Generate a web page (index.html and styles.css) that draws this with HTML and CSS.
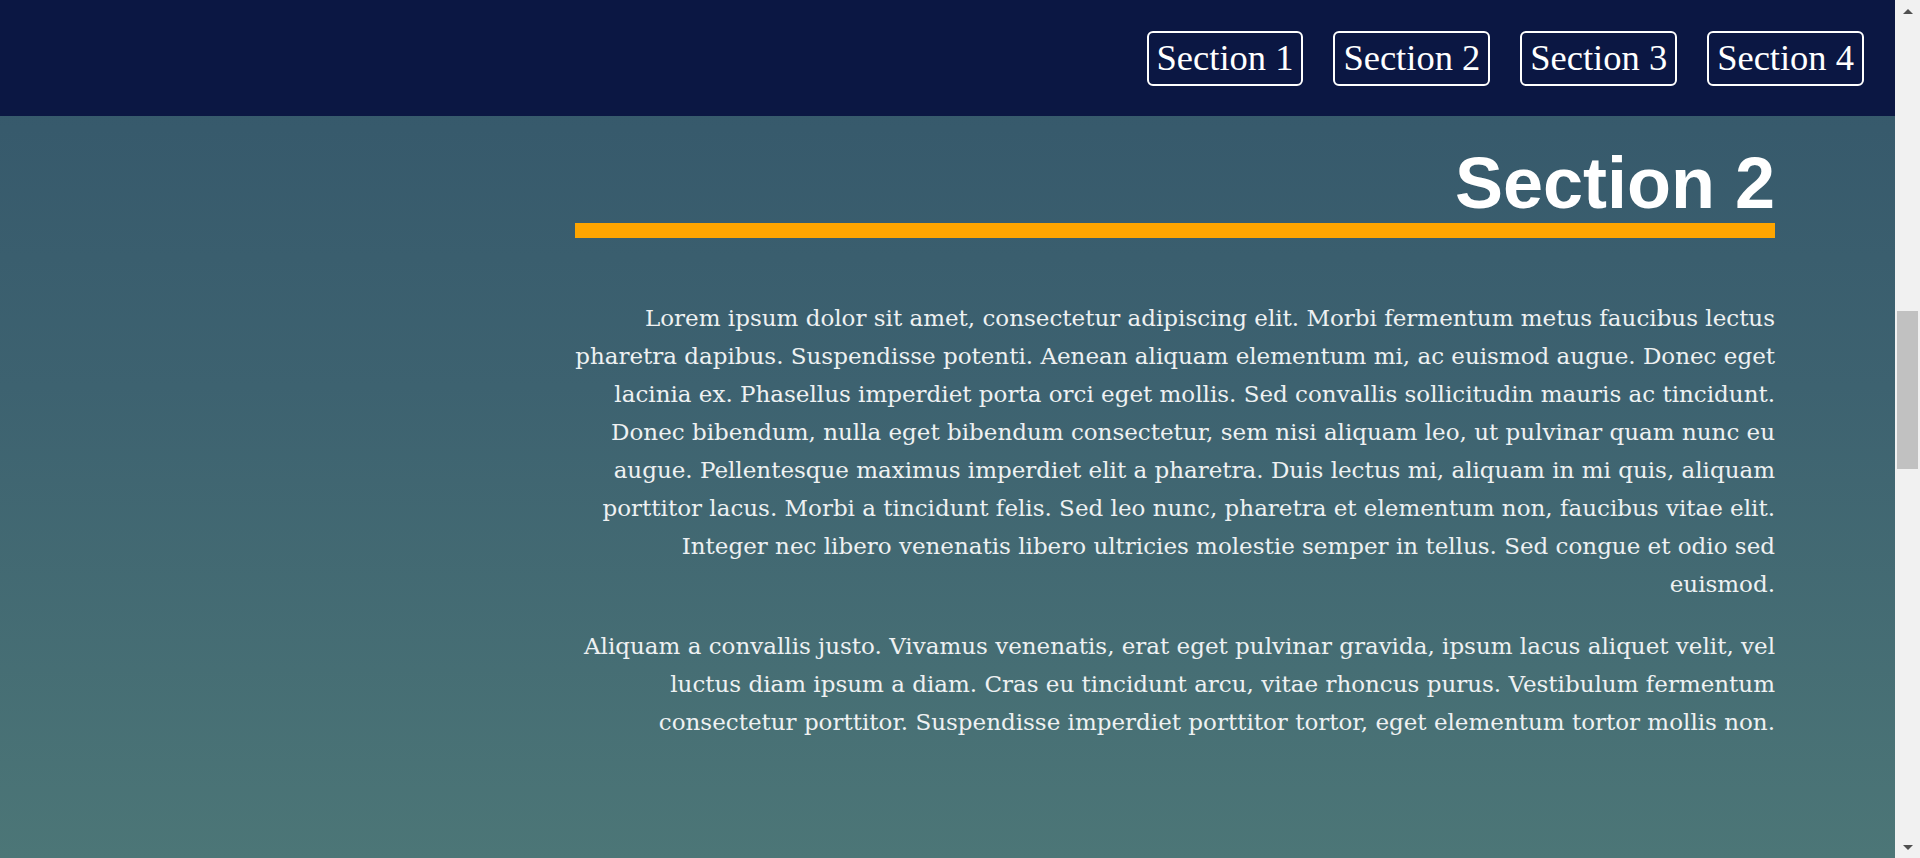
FILE: index.html
```html
<!DOCTYPE html>
<html lang="en">
<head>
<meta charset="utf-8">
<title>Section 2</title>
<link rel="stylesheet" href="styles.css">
</head>
<body>
<div class="viewport">
  <div class="page">
    <header class="topbar">
      <nav class="nav">
        <a class="nav-btn" href="#s1">Section 1</a>
        <a class="nav-btn" href="#s2">Section 2</a>
        <a class="nav-btn" href="#s3">Section 3</a>
        <a class="nav-btn" href="#s4">Section 4</a>
      </nav>
    </header>
    <main class="content">
      <section class="section" id="s2">
        <h1 class="section-title">Section 2</h1>
        <div class="title-bar"></div>
        <p class="text">Lorem ipsum dolor sit amet, consectetur adipiscing elit. Morbi fermentum metus faucibus lectus pharetra dapibus. Suspendisse potenti. Aenean aliquam elementum mi, ac euismod augue. Donec eget lacinia ex. Phasellus imperdiet porta orci eget mollis. Sed convallis sollicitudin mauris ac tincidunt. Donec bibendum, nulla eget bibendum consectetur, sem nisi aliquam leo, ut pulvinar quam nunc eu augue. Pellentesque maximus imperdiet elit a pharetra. Duis lectus mi, aliquam in mi quis, aliquam porttitor lacus. Morbi a tincidunt felis. Sed leo nunc, pharetra et elementum non, faucibus vitae elit. Integer nec libero venenatis libero ultricies molestie semper in tellus. Sed congue et odio sed euismod.</p>
        <p class="text">Aliquam a convallis justo. Vivamus venenatis, erat eget pulvinar gravida, ipsum lacus aliquet velit, vel luctus diam ipsum a diam. Cras eu tincidunt arcu, vitae rhoncus purus. Vestibulum fermentum consectetur porttitor. Suspendisse imperdiet porttitor tortor, eget elementum tortor mollis non.</p>
      </section>
    </main>
  </div>
  <div class="scrollbar" aria-hidden="true">
    <div class="sb-arrow sb-up"></div>
    <div class="sb-track"><div class="sb-thumb"></div></div>
    <div class="sb-arrow sb-down"></div>
  </div>
</div>
</body>
</html>
```
FILE: styles.css
```css
html, body {
  margin: 0;
  padding: 0;
  height: 100%;
  overflow: hidden;
}

.viewport {
  display: flex;
  height: 858px;
  width: 1920px;
}

.page {
  flex: 1;
  display: flex;
  flex-direction: column;
  background: linear-gradient(to bottom, #34566a 0%, #3d6270 45%, #4c7677 100%);
}

.topbar {
  height: 116px;
  flex: none;
  background: #0b1743;
  display: flex;
  align-items: center;
  justify-content: flex-end;
  padding-right: 31px;
}

.nav {
  display: flex;
  gap: 30px;
}

.nav-btn {
  display: block;
  height: 51px;
  line-height: 49px;
  padding: 0 8px;
  border: 2px solid #ffffff;
  border-radius: 6px;
  color: #ffffff;
  text-decoration: none;
  font-family: "Liberation Serif", "Times New Roman", serif;
  font-size: 36.5px;
}

.content {
  flex: 1;
  padding-left: 575px;
}

.section {
  width: 1200px;
}

.section-title {
  margin: 31px 0 4px;
  font-family: "Liberation Sans", Arial, sans-serif;
  font-weight: bold;
  font-size: 72px;
  line-height: 1;
  color: #ffffff;
  text-align: right;
}

.title-bar {
  height: 15px;
  background: #ffa500;
  margin-bottom: 61px;
}

.text {
  margin: 0 0 24px;
  font-family: "DejaVu Serif", serif;
  font-size: 23px;
  line-height: 38px;
  color: #eef1f2;
  text-align: right;
}

.scrollbar {
  width: 25px;
  flex: none;
  background: #f1f1f1;
  display: flex;
  flex-direction: column;
}

.sb-arrow {
  height: 22px;
  flex: none;
  display: flex;
  align-items: center;
  justify-content: center;
}

.sb-up::before,
.sb-down::before {
  content: "";
  width: 0;
  height: 0;
  border-left: 5.5px solid transparent;
  border-right: 5.5px solid transparent;
}

.sb-up::before {
  border-bottom: 5px solid #505050;
}

.sb-down::before {
  border-top: 5px solid #505050;
}

.sb-track {
  flex: 1;
  padding-top: 289px;
}

.sb-thumb {
  margin: 0 2px 0 2px;
  height: 158px;
  background: #c1c1c1;
}
```
